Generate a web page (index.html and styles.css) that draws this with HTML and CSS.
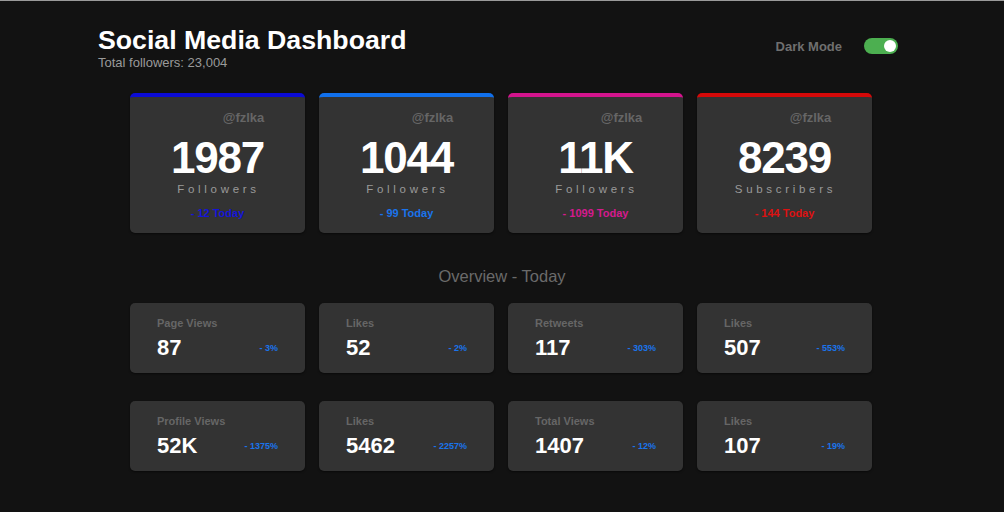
FILE: index.html
```html
<!DOCTYPE html>
<html>
<head>
<meta charset="utf-8">
<link rel="stylesheet" href="styles.css">
</head>
<body>
<header class="header">
  <div class="titles">
    <h1 class="title">Social Media Dashboard</h1>
    <p class="subtitle">Total followers: 23,004</p>
  </div>
  <div class="mode">
    <span class="mode-label">Dark Mode</span>
    <span class="toggle"><span class="knob"></span></span>
  </div>
</header>

<section class="cards">
  <div class="card c-blue">
    <div class="handle">@fzlka</div>
    <div class="count">1987</div>
    <div class="unit">Followers</div>
    <div class="today">- 12 Today</div>
  </div>
  <div class="card c-fb">
    <div class="handle">@fzlka</div>
    <div class="count">1044</div>
    <div class="unit">Followers</div>
    <div class="today">- 99 Today</div>
  </div>
  <div class="card c-pink">
    <div class="handle">@fzlka</div>
    <div class="count">11K</div>
    <div class="unit">Followers</div>
    <div class="today">- 1099 Today</div>
  </div>
  <div class="card c-red">
    <div class="handle">@fzlka</div>
    <div class="count">8239</div>
    <div class="unit">Subscribers</div>
    <div class="today">- 144 Today</div>
  </div>
</section>

<h2 class="overview-title">Overview - Today</h2>

<section class="overview">
  <div class="ov"><div class="ov-label">Page Views</div><div class="ov-row"><span class="ov-num">87</span><span class="ov-pct">- 3%</span></div></div>
  <div class="ov"><div class="ov-label">Likes</div><div class="ov-row"><span class="ov-num">52</span><span class="ov-pct">- 2%</span></div></div>
  <div class="ov"><div class="ov-label">Retweets</div><div class="ov-row"><span class="ov-num">117</span><span class="ov-pct">- 303%</span></div></div>
  <div class="ov"><div class="ov-label">Likes</div><div class="ov-row"><span class="ov-num">507</span><span class="ov-pct">- 553%</span></div></div>
  <div class="ov"><div class="ov-label">Profile Views</div><div class="ov-row"><span class="ov-num">52K</span><span class="ov-pct">- 1375%</span></div></div>
  <div class="ov"><div class="ov-label">Likes</div><div class="ov-row"><span class="ov-num">5462</span><span class="ov-pct">- 2257%</span></div></div>
  <div class="ov"><div class="ov-label">Total Views</div><div class="ov-row"><span class="ov-num">1407</span><span class="ov-pct">- 12%</span></div></div>
  <div class="ov"><div class="ov-label">Likes</div><div class="ov-row"><span class="ov-num">107</span><span class="ov-pct">- 19%</span></div></div>
</section>
</body>
</html>
```

FILE: styles.css
```css
* { box-sizing: border-box; }

html, body {
  margin: 0;
  padding: 0;
}

body {
  background: #121212;
  border-top: 1px solid #9a9a9a;
  font-family: "Liberation Sans", Arial, sans-serif;
  color: #fff;
  height: 512px;
  overflow: hidden;
}

.header {
  display: flex;
  justify-content: space-between;
  align-items: flex-start;
  padding: 25px 106px 0 98px;
}

.title {
  margin: 0;
  font-size: 26.7px;
  font-weight: bold;
  line-height: 29px;
  color: #fff;
}

.subtitle {
  margin: 0;
  font-size: 13px;
  line-height: 15px;
  color: #9a9a9a;
}

.mode {
  display: flex;
  align-items: center;
  gap: 22px;
  margin-top: 12px;
}

.mode-label {
  font-size: 13px;
  font-weight: bold;
  color: #6f6f6f;
}

.toggle {
  width: 34px;
  height: 16px;
  border-radius: 8px;
  background: #4caf50;
  display: flex;
  align-items: center;
  justify-content: flex-end;
  padding-right: 2px;
}

.knob {
  width: 12px;
  height: 12px;
  border-radius: 50%;
  background: #fff;
}

.cards {
  display: grid;
  grid-template-columns: repeat(4, 175px);
  gap: 14px;
  justify-content: center;
  margin: 23px 0 0 -2px;
}

.card {
  background: #333;
  border-radius: 5px;
  border-top: 4px solid #0000dd;
  height: 140px;
  display: flex;
  flex-direction: column;
  align-items: center;
  padding-top: 13px;
  box-shadow: 0 1px 2px rgba(0,0,0,0.5);
}

.handle {
  font-size: 13px;
  font-weight: bold;
  color: #666;
  line-height: 16px;
  padding-left: 52px;
}

.count {
  font-size: 44px;
  font-weight: bold;
  line-height: 48px;
  letter-spacing: -1.2px;
  margin-top: 8px;
  color: #fff;
}

.unit {
  font-size: 11.5px;
  letter-spacing: 3.7px;
  color: #9a9a9a;
  line-height: 14px;
  margin-top: 0;
  padding-left: 2px;
}

.today {
  font-size: 11px;
  font-weight: bold;
  line-height: 14px;
  margin-top: 10px;
}

.c-blue { border-top-color: #0b0bd6; }
.c-blue .today { color: #1414d9; }
.c-fb { border-top-color: #1170ec; }
.c-fb .today { color: #1a74ec; }
.c-pink { border-top-color: #d3148d; }
.c-pink .today { color: #d51a8e; }
.c-red { border-top-color: #d40909; }
.c-red .today { color: #dd1111; }

.overview-title {
  margin: 33px 0 0;
  text-align: center;
  font-size: 16.5px;
  font-weight: normal;
  line-height: 20px;
  color: #6a6a6a;
}

.overview {
  display: grid;
  grid-template-columns: repeat(4, 175px);
  column-gap: 14px;
  row-gap: 28px;
  justify-content: center;
  margin: 17px 0 0 -2px;
}

.ov {
  background: #333;
  border-radius: 5px;
  height: 70px;
  padding: 14px 27px 0 27px;
  box-shadow: 0 1px 2px rgba(0,0,0,0.5);
}

.ov-label {
  font-size: 11px;
  font-weight: bold;
  color: #666;
  line-height: 13px;
}

.ov-row {
  display: flex;
  justify-content: space-between;
  align-items: center;
  margin-top: 5px;
}

.ov-num {
  font-size: 22px;
  font-weight: bold;
  line-height: 26px;
  color: #fff;
}

.ov-pct {
  font-size: 9px;
  font-weight: bold;
  color: #1a74ec;
}
```
